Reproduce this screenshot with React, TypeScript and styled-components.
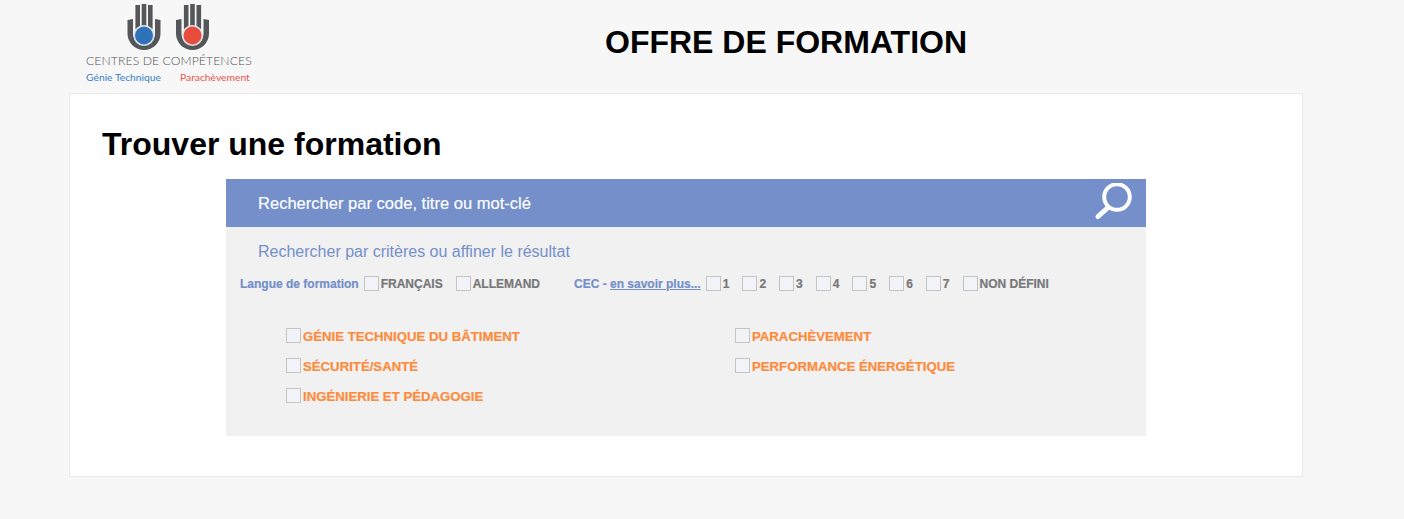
import React from "react";
import styled, { createGlobalStyle } from "styled-components";

const Global = createGlobalStyle`
  html, body { margin: 0; padding: 0; background: #f7f7f7; font-family: "Liberation Sans", Arial, sans-serif; }
`;

const Page = styled.div`
  width: 1404px;
  height: 519px;
  overflow: hidden;
  padding-left: 69px;
  box-sizing: border-box;
`;

const Header = styled.header`
  height: 93px;
  width: 1234px;
  display: flex;
  align-items: flex-start;
`;

const Logo = styled.div`
  width: 183px;
  margin-left: 16px;
  flex: none;
  display: flex;
  flex-direction: column;
`;

const LogoMark = styled.svg`
  display: block;
  width: 170px;
  height: 53px;
`;

const LogoName = styled.div`
  font-family: "Lato", "Liberation Sans", sans-serif;
  font-weight: 300;
  font-size: 12.2px;
  line-height: 14px;
  letter-spacing: 0.1px;
  color: #4f5256;
  white-space: nowrap;
  margin: 1px 0 0 1px;
`;

const LogoSubs = styled.div`
  display: flex;
  font-family: "Lato", "Liberation Sans", sans-serif;
  font-size: 10.3px;
  line-height: 12px;
  margin: 3px 0 0 1px;
  white-space: nowrap;
`;

const LogoSub = styled.span<{ $color: string; $width: number }>`
  color: ${(p) => p.$color};
  width: ${(p) => p.$width}px;
`;

const PageTitle = styled.h1`
  margin: 24px 0 0 337px;
  font-size: 32px;
  line-height: 37px;
  font-weight: 700;
  color: #000;
  white-space: nowrap;
`;

const Card = styled.main`
  width: 1234px;
  height: 384px;
  box-sizing: border-box;
  background: #fff;
  border: 1px solid #e9e9e9;
  padding: 32px 0 0 32px;
`;

const Heading = styled.h2`
  margin: 0;
  font-size: 32px;
  line-height: 37px;
  font-weight: 700;
  color: #000;
`;

const Panel = styled.section`
  width: 920px;
  height: 257px;
  margin: 16px 0 0 124px;
  background: #f1f1f1;
`;

const SearchBar = styled.div`
  height: 48px;
  background: #748fca;
  display: flex;
  align-items: center;
  justify-content: space-between;
  padding: 0 13px 0 32px;
`;

const SearchText = styled.span`
  color: #fff;
  font-size: 16.55px;
  margin-top: 2px;
  -webkit-text-stroke: 0.15px #fff;
`;

const SearchIcon = styled.svg`
  width: 40px;
  height: 40px;
  display: block;
`;

const SubTitle = styled.div`
  margin: 15px 0 0 32px;
  font-size: 16px;
  line-height: 20px;
  color: #748fca;
`;

const FilterRow = styled.div`
  display: flex;
  align-items: center;
  height: 16px;
  margin: 14px 0 0 14px;
  font-size: 12px;
  font-weight: 700;
`;

const FilterLabel = styled.span`
  color: #748fca;
  margin-right: 5px;
  white-space: nowrap;
  -webkit-text-stroke: 0.2px #748fca;
`;

const FilterLink = styled.a`
  color: #748fca;
  text-decoration: underline;
`;

const Option = styled.label<{ $gap?: number; $large?: boolean }>`
  display: flex;
  align-items: center;
  gap: 2px;
  margin-right: ${(p) => p.$gap ?? 13}px;
  color: ${(p) => (p.$large ? "#fd8b3c" : "#77777a")};
  -webkit-text-stroke: 0.2px ${(p) => (p.$large ? "#fd8b3c" : "#77777a")};
  font-size: ${(p) => (p.$large ? 13.2 : 12)}px;
  line-height: 19px;
  font-weight: 700;
  white-space: nowrap;
`;

const Box = styled.span`
  width: 15px;
  height: 15px;
  margin-bottom: 2px;
  box-sizing: border-box;
  background: #f2f3f8;
  border: 1px solid #c4c4c4;
  flex: none;
`;

const Categories = styled.div`
  display: grid;
  grid-template-columns: 449px 1fr;
  grid-auto-rows: 30px;
  align-items: center;
  margin: 29px 0 0 60px;
`;

const hands = [
  { x: 59, fill: "#2f72b8" },
  { x: 107.5, fill: "#e84c3d" },
];

function Hand({ x, fill }: { x: number; fill: string }) {
  return (
    <g transform={`translate(${x} 0)`}>
      <rect x="-8.6" y="5" width="4.6" height="24" fill="#54565a" />
      <rect x="-2.3" y="4" width="4.6" height="24" fill="#54565a" />
      <rect x="4" y="5" width="4.6" height="24" fill="#54565a" />
      <path
        d="M-16.5 20 L-11 19 V33.5 A11 11 0 0 0 11 33.5 V19 L16.5 20 V33.5 A16.5 16.5 0 0 1 -16.5 33.5 Z"
        fill="#54565a"
      />
      <circle cx="0" cy="35.5" r="10.5" fill="#dfe3e8" />
      <circle cx="0" cy="35.5" r="9" fill={fill} />
    </g>
  );
}

export default function App() {
  return (
    <Page>
      <Global />
      <Header>
        <Logo>
          <LogoMark viewBox="0 0 170 53">
            {hands.map((h) => (
              <Hand key={h.x} x={h.x} fill={h.fill} />
            ))}
          </LogoMark>
          <LogoName>CENTRES DE COMPÉTENCES</LogoName>
          <LogoSubs>
            <LogoSub $color="#3a7fc8" $width={94}>Génie Technique</LogoSub>
            <LogoSub $color="#e8564a" $width={80}>Parachèvement</LogoSub>
          </LogoSubs>
        </Logo>
        <PageTitle>OFFRE DE FORMATION</PageTitle>
      </Header>
      <Card>
        <Heading>Trouver une formation</Heading>
        <Panel>
          <SearchBar>
            <SearchText>Rechercher par code, titre ou mot-clé</SearchText>
            <SearchIcon viewBox="0 0 40 40" fill="none" stroke="#fff" strokeLinecap="round">
              <circle cx="24" cy="14" r="12.8" strokeWidth="4" />
              <path d="M14.5 25 L5 33.5" strokeWidth="5" />
            </SearchIcon>
          </SearchBar>
          <SubTitle>Rechercher par critères ou affiner le résultat</SubTitle>
          <FilterRow>
            <FilterLabel>Langue de formation</FilterLabel>
            <Option><Box />FRANÇAIS</Option>
            <Option $gap={34}><Box />ALLEMAND</Option>
            <FilterLabel>
              CEC - <FilterLink>en savoir plus...</FilterLink>
            </FilterLabel>
            {["1", "2", "3", "4", "5", "6", "7", "NON DÉFINI"].map((v) => (
              <Option key={v}><Box />{v}</Option>
            ))}
          </FilterRow>
          <Categories>
            <Option $large><Box />GÉNIE TECHNIQUE DU BÂTIMENT</Option>
            <Option $large><Box />PARACHÈVEMENT</Option>
            <Option $large><Box />SÉCURITÉ/SANTÉ</Option>
            <Option $large><Box />PERFORMANCE ÉNERGÉTIQUE</Option>
            <Option $large><Box />INGÉNIERIE ET PÉDAGOGIE</Option>
          </Categories>
        </Panel>
      </Card>
    </Page>
  );
}
